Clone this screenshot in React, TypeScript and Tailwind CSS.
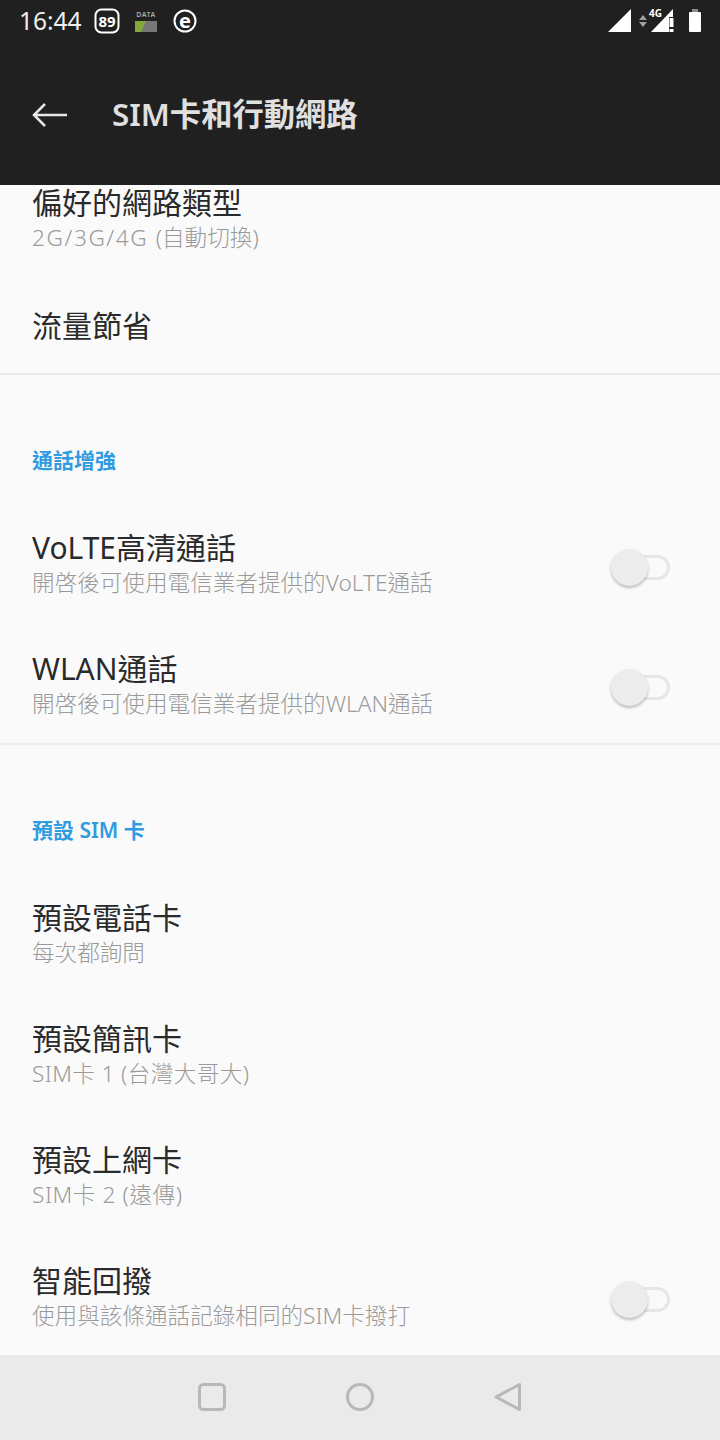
import type { ReactNode } from "react";

const cjk = "font-['Noto_Sans','Noto_Sans_CJK_TC',sans-serif]";

function Toggle() {
  return (
    <div className="relative w-[59px] h-[37px] shrink-0 flex items-center mt-[4px]">
      <div className="ml-[6px] w-[53px] h-[25px] rounded-full border-[3px] border-[#e6e6e6]" />
      <div className="absolute left-0 top-0 w-[37px] h-[37px] rounded-full bg-[#ececec] shadow-[0_2px_3px_rgba(0,0,0,0.25)]" />
    </div>
  );
}

function Row({ title, sub, toggle, h = "h-[120px]" }: { title: string; sub?: ReactNode; toggle?: boolean; h?: string }) {
  return (
    <div className={`${h} flex items-center justify-between pl-8 pr-[50px]`}>
      <div className="pb-[2px]">
        <div className="text-[30px] leading-[36px] text-[#2a2a2a]">{title}</div>
        {sub && <div className="mt-[2px] text-[22.6px] leading-[30px] font-light text-[#9a9a9a]">{sub}</div>}
      </div>
      {toggle && <Toggle />}
    </div>
  );
}

function Section({ title, h, pb }: { title: string; h: string; pb: string }) {
  return (
    <div className={`${h} ${pb} pl-8 flex items-end text-[21px] leading-[30px] font-semibold text-[#2f9be0]`}>
      {title}
    </div>
  );
}

function StatusBar() {
  return (
    <div className="h-[42px] flex items-center justify-between pl-[19px] pr-[18px] text-white">
      <div className="flex items-center">
        <span className="text-[24.5px] leading-none text-[#eeeeee] w-[75px]">16:44</span>
        <svg width="26" height="26" viewBox="0 0 26 26">
          <rect x="1.5" y="1.5" width="23" height="23" rx="6" fill="none" stroke="#fff" strokeWidth="2" />
        </svg>
        <span className="-ml-[23px] w-5 text-center text-[15px] leading-none font-bold">89</span>
        <div className="ml-[18px] w-[22px] flex flex-col items-center">
          <span className="text-[7px] leading-[8px] tracking-[0.5px] text-[#aaaaaa] font-semibold">DATA</span>
          <svg width="22" height="11" viewBox="0 0 22 11" className="mt-[2px]">
            <rect width="22" height="11" fill="#777777" />
            <polygon points="0,0 11,0 6,11 0,11" fill="#84a83a" />
          </svg>
        </div>
        <svg width="26" height="26" viewBox="0 0 26 26" className="ml-[16px]">
          <circle cx="12" cy="13" r="10.5" fill="none" stroke="#fff" strokeWidth="2" />
        </svg>
        <span className="-ml-[26px] w-6 text-center text-[20px] leading-none font-bold">e</span>
      </div>
      <div className="flex items-center">
        <svg width="24" height="24" viewBox="0 0 24 24">
          <polygon points="0,23 23,0 23,23" fill="#fff" />
        </svg>
        <svg width="10" height="24" viewBox="0 0 10 24" className="ml-[6px]">
          <polygon points="5,6 9,11 1,11" fill="#a0a0a0" />
          <polygon points="1,13 9,13 5,18" fill="#a0a0a0" />
        </svg>
        <div className="relative w-[26px] h-6 ml-[2px]">
          <svg width="26" height="24" viewBox="0 0 26 24">
            <polygon points="1,23 23,0 23,23" fill="#fff" />
            <rect x="19" y="8" width="7" height="16" fill="#202020" />
            <rect x="19.5" y="9" width="4" height="9" fill="#fff" />
            <rect x="19.5" y="20" width="4" height="3" fill="#fff" />
          </svg>
          <span className="absolute -left-[1px] -top-[1px] text-[10px] leading-[10px] font-bold text-white bg-[#202020]">4G</span>
        </div>
        <svg width="14" height="24" viewBox="0 0 14 24" className="ml-[12px]">
          <rect x="4" y="0" width="6" height="4" fill="#8a8a8a" />
          <rect x="1" y="3" width="12" height="20" rx="1" fill="#fff" />
        </svg>
      </div>
    </div>
  );
}

export default function App() {
  return (
    <div className={`w-[720px] h-[1440px] flex flex-col overflow-hidden bg-[#fafafa] ${cjk}`}>
      <div className="h-[185px] bg-[#202020] shrink-0">
        <StatusBar />
        <div className="h-[143px] pt-[3px] flex items-center pl-8">
          <svg width="36" height="26" viewBox="0 0 36 26">
            <path d="M35 13H2M13 2L2 13l11 11" fill="none" stroke="#e8e8e8" strokeWidth="2.5" />
          </svg>
          <span className="ml-[44px] text-[31.3px] leading-none font-semibold text-[#e0e0e0]">SIM卡和行動網路</span>
        </div>
      </div>

      <div className="flex-1 min-h-0">
        {/* 위쪽 행은 스크롤로 잘린 상태 */}
        <div className="h-[83px] pl-8 flex flex-col justify-end pb-[15px]">
          <div className="text-[30px] leading-[36px] text-[#2a2a2a]">偏好的網路類型</div>
          <div className="mt-[2px] text-[22.6px] leading-[30px] font-light text-[#9a9a9a]">
            <span className="tracking-[1.6px]">2G/3G/4G </span>(自動切換)
          </div>
        </div>
        <Row title="流量節省" h="h-[105px] pt-[12px]" />
        <div className="border-t-2 border-[#ececec]" />
        <Section title="通話增強" h="h-[130px]" pb="pb-[30px]" />
        <Row title="VoLTE高清通話" sub="開啓後可使用電信業者提供的VoLTE通話" toggle />
        <Row title="WLAN通話" sub="開啓後可使用電信業者提供的WLAN通話" toggle h="h-[118px] pt-[3px]" />
        <div className="border-t-2 border-[#ececec]" />
        <Section title="預設 SIM 卡" h="h-[129px]" pb="pb-[29px]" />
        <Row title="預設電話卡" sub="每次都詢問" h="h-[121px]" />
        <Row title="預設簡訊卡" sub={<span className="tracking-[0.4px]">SIM卡 1 (台灣大哥大)</span>} h="h-[121px]" />
        <Row title="預設上網卡" sub={<span className="tracking-[0.6px]">SIM卡 2 (遠傳)</span>} h="h-[120px] pt-[1px]" />
        <Row title="智能回撥" sub="使用與該條通話記錄相同的SIM卡撥打" toggle h="h-[120px] pt-[3px]" />
      </div>

      <div className="h-[85px] shrink-0 bg-[#eaeaea] flex items-center justify-center gap-[120px]">
        <svg width="28" height="28" viewBox="0 0 28 28" className="-mt-[1px]">
          <rect x="1.5" y="1.5" width="25" height="25" rx="4" fill="none" stroke="#b8b8b8" strokeWidth="3" />
        </svg>
        <svg width="28" height="28" viewBox="0 0 28 28" className="-mt-[1px]">
          <circle cx="14" cy="14" r="12.5" fill="none" stroke="#b8b8b8" strokeWidth="3" />
        </svg>
        <svg width="28" height="28" viewBox="0 0 28 28" className="-mt-[1px]">
          <path d="M25.5 1.5v25L2 14z" fill="none" stroke="#b8b8b8" strokeWidth="3" strokeLinejoin="round" />
        </svg>
      </div>
    </div>
  );
}
